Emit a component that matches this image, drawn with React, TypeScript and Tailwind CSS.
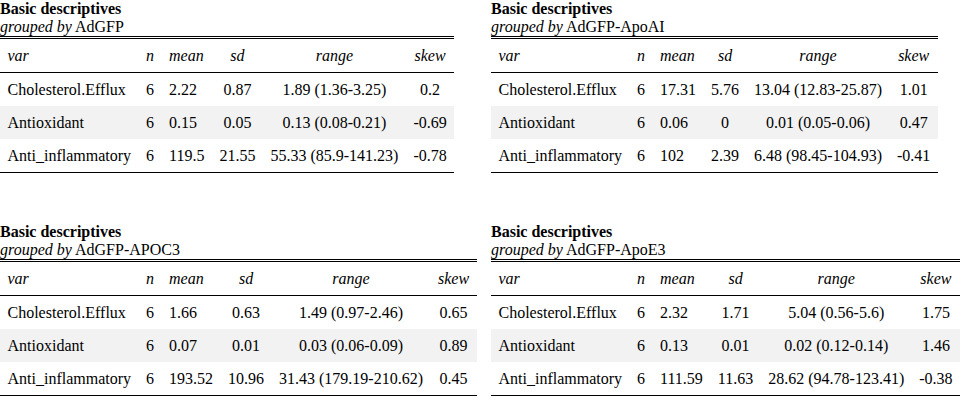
type Row = [string, string, string, string, string, string];

interface DescTable {
  group: string;
  rows: Row[];
}

const tables: DescTable[] = [
  {
    group: "AdGFP",
    rows: [
      ["Cholesterol.Efflux", "6", "2.22", "0.87", "1.89 (1.36-3.25)", "0.2"],
      ["Antioxidant", "6", "0.15", "0.05", "0.13 (0.08-0.21)", "-0.69"],
      ["Anti_inflammatory", "6", "119.5", "21.55", "55.33 (85.9-141.23)", "-0.78"],
    ],
  },
  {
    group: "AdGFP-ApoAI",
    rows: [
      ["Cholesterol.Efflux", "6", "17.31", "5.76", "13.04 (12.83-25.87)", "1.01"],
      ["Antioxidant", "6", "0.06", "0", "0.01 (0.05-0.06)", "0.47"],
      ["Anti_inflammatory", "6", "102", "2.39", "6.48 (98.45-104.93)", "-0.41"],
    ],
  },
  {
    group: "AdGFP-APOC3",
    rows: [
      ["Cholesterol.Efflux", "6", "1.66", "0.63", "1.49 (0.97-2.46)", "0.65"],
      ["Antioxidant", "6", "0.07", "0.01", "0.03 (0.06-0.09)", "0.89"],
      ["Anti_inflammatory", "6", "193.52", "10.96", "31.43 (179.19-210.62)", "0.45"],
    ],
  },
  {
    group: "AdGFP-ApoE3",
    rows: [
      ["Cholesterol.Efflux", "6", "2.32", "1.71", "5.04 (0.56-5.6)", "1.75"],
      ["Antioxidant", "6", "0.13", "0.01", "0.02 (0.12-0.14)", "1.46"],
      ["Anti_inflammatory", "6", "111.59", "11.63", "28.62 (94.78-123.41)", "-0.38"],
    ],
  },
];

const headers = ["var", "n", "mean", "sd", "range", "skew"];
const align = ["text-left", "text-left", "text-left", "text-center", "text-center", "text-center"];

function Descriptives({ table }: { table: DescTable }) {
  return (
    <div className="w-fit">
      <div className="text-[16px] font-bold leading-[18px]">Basic descriptives</div>
      <div className="text-[16px] leading-[18px]">
        <i>grouped by</i> {table.group}
      </div>
      <div className="h-[3px] border-y border-black" />
      <table className="border-separate border-spacing-0 whitespace-nowrap font-[family-name:Liberation_Serif,serif] text-[16px] text-black">
        <thead>
          <tr>
            {headers.map((h, i) => (
              <th
                key={h}
                className={`h-[34px] border-b border-black px-[7.5px] py-0 font-normal italic ${align[i]}`}
              >
                {h}
              </th>
            ))}
          </tr>
        </thead>
        <tbody>
          {table.rows.map((row, r) => {
            const last = r === table.rows.length - 1;
            return (
              <tr key={row[0]} className={r === 1 ? "bg-[#f2f2f2]" : ""}>
                {row.map((cell, i) => (
                  <td
                    key={i}
                    className={`px-[7.5px] py-0 ${align[i]} ${last ? "h-[34px] border-b border-black" : "h-[33px]"}`}
                  >
                    {cell}
                  </td>
                ))}
              </tr>
            );
          })}
        </tbody>
      </table>
    </div>
  );
}

export default function App() {
  return (
    <div className="grid h-[401px] w-[970px] grid-cols-[491px_1fr] content-start gap-y-[50px] bg-white font-[family-name:Liberation_Serif,serif] text-black">
      {tables.map((t) => (
        <Descriptives key={t.group} table={t} />
      ))}
    </div>
  );
}
